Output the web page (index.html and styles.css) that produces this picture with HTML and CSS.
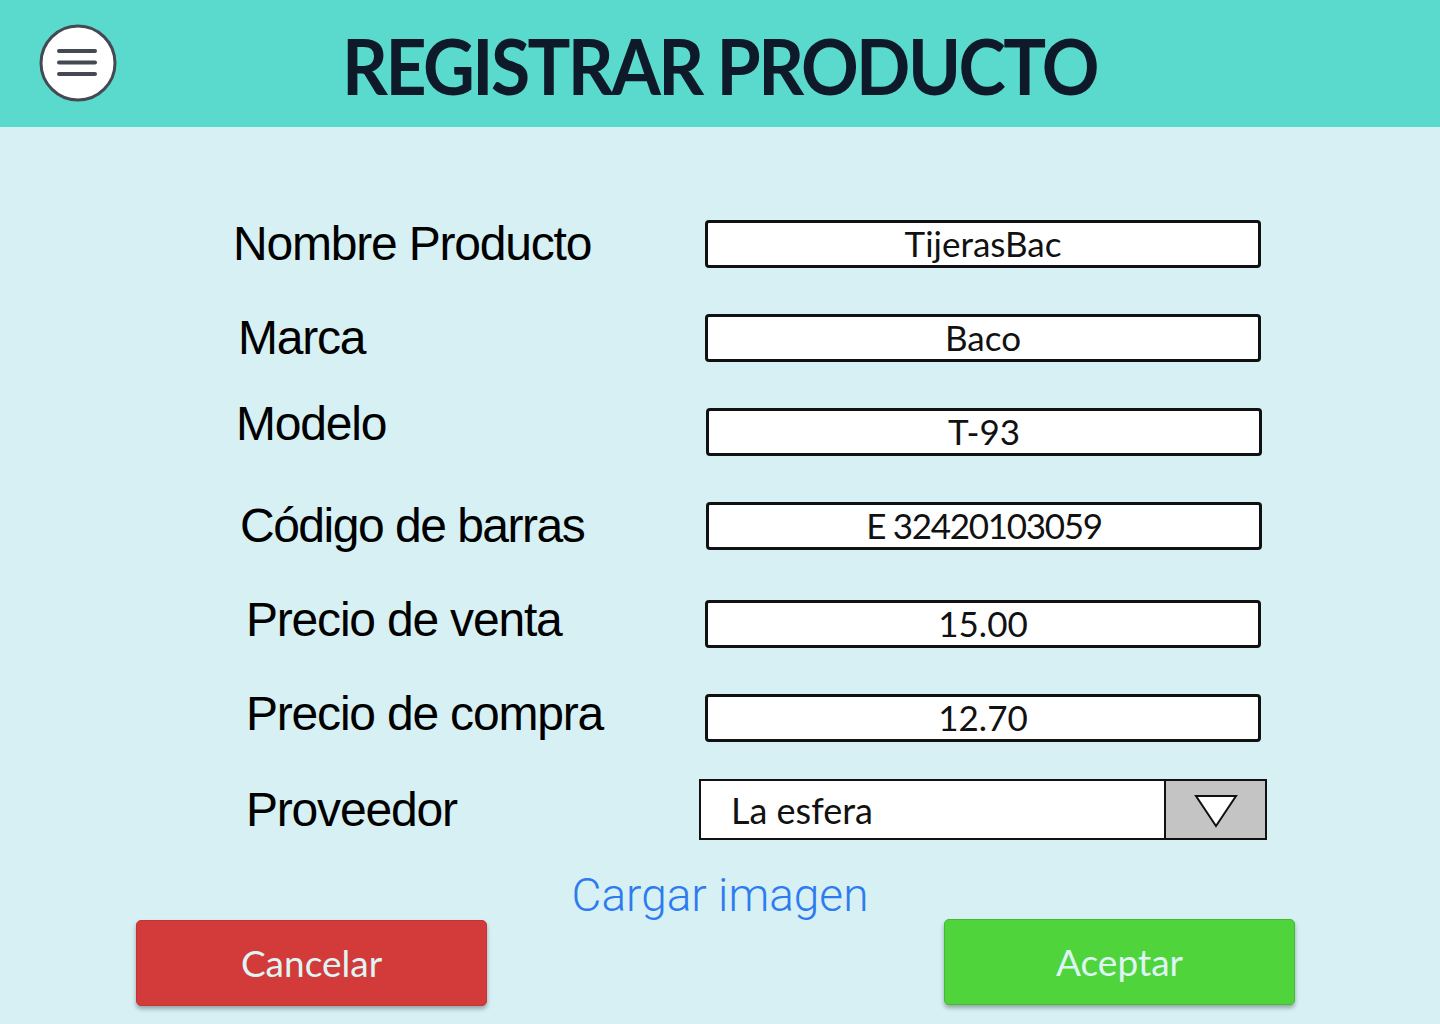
FILE: index.html
```html
<!DOCTYPE html>
<html lang="es">
<head>
<meta charset="utf-8">
<title>Registrar producto</title>
<link rel="stylesheet" href="styles.css">
</head>
<body>
<header class="topbar">
  <button class="menu-btn" aria-label="Menú">
    <svg width="80" height="80" viewBox="0 0 80 80">
      <circle cx="40" cy="40" r="37" fill="#ffffff" stroke="#454954" stroke-width="3"/>
      <g stroke="#454954" stroke-width="4" stroke-linecap="round">
        <line x1="21" y1="28" x2="57" y2="28"/>
        <line x1="21" y1="39.5" x2="57" y2="39.5"/>
        <line x1="21" y1="51" x2="57" y2="51"/>
      </g>
    </svg>
  </button>
  <h1 class="title">REGISTRAR PRODUCTO</h1>
</header>
<main class="content">
  <form class="form">
    <div class="row">
      <span class="label">Nombre Producto</span>
      <div class="field">TijerasBac</div>
    </div>
    <div class="row">
      <span class="label l-marca">Marca</span>
      <div class="field">Baco</div>
    </div>
    <div class="row">
      <span class="label l-modelo">Modelo</span>
      <div class="field f-shift">T-93</div>
    </div>
    <div class="row">
      <span class="label l-codigo">Código de barras</span>
      <div class="field f-shift f-code">E 32420103059</div>
    </div>
    <div class="row row-down">
      <span class="label l-precio l-low">Precio de venta</span>
      <div class="field">15.00</div>
    </div>
    <div class="row">
      <span class="label l-precio l-low">Precio de compra</span>
      <div class="field">12.70</div>
    </div>
    <div class="row row-select">
      <span class="label l-precio">Proveedor</span>
      <div class="select">
        <span class="select-value">La esfera</span>
        <span class="select-arrow">
          <svg width="48" height="40" viewBox="0 0 48 40">
            <polygon points="4,4 44,4 24,34" fill="#ffffff" stroke="#111111" stroke-width="2" stroke-linejoin="miter"/>
          </svg>
        </span>
      </div>
    </div>
  </form>
  <a class="upload" href="#">Cargar imagen</a>
  <div class="actions">
    <button class="btn btn-cancel">Cancelar</button>
    <button class="btn btn-ok">Aceptar</button>
  </div>
</main>
</body>
</html>
```
FILE: styles.css
```css
* { box-sizing: border-box; }
html, body { margin: 0; padding: 0; }
body {
  width: 1440px;
  height: 1024px;
  overflow: hidden;
  background: #d6f0f3;
  font-family: "Lato", "Liberation Sans", sans-serif;
}
.topbar {
  height: 127px;
  background: #5adacc;
  display: flex;
  align-items: center;
  justify-content: center;
  position: relative;
}
.menu-btn {
  position: absolute;
  left: 38px;
  top: 23px;
  width: 80px;
  height: 80px;
  padding: 0;
  border: 0;
  background: transparent;
  cursor: pointer;
}
.menu-btn svg { display: block; }
.title {
  margin: 0;
  font-family: "Lato", sans-serif;
  font-weight: 700;
  font-size: 76px;
  letter-spacing: -2.7px;
  color: #0e1a2a;
  line-height: 1;
  padding-top: 4px;
  transform: scaleX(0.94);
}
.content {
  padding-top: 93px;
}
.form {
  display: flex;
  flex-direction: column;
  gap: 46px;
  margin: 0 0 0 233px;
}
.row {
  display: flex;
  align-items: center;
  height: 48px;
}
.row-down { margin-top: 4px; }
.row-select {
  height: 61px;
  margin-top: -9px;
}
.label {
  flex: 0 0 472px;
  width: 472px;
  font-family: "Liberation Sans", Arial, sans-serif;
  font-size: 48px;
  letter-spacing: -1.2px;
  color: #000;
  white-space: nowrap;
  line-height: 1;
}
.l-marca { padding-left: 5px; }
.l-modelo { padding-left: 3px; position: relative; top: -8px; }
.l-codigo { padding-left: 7px; letter-spacing: -1.5px; }
.l-precio { padding-left: 13px; }
.l-low { position: relative; top: -4px; }
.field {
  width: 556px;
  height: 48px;
  border: 3px solid #111;
  border-radius: 4px;
  background: #fff;
  display: flex;
  align-items: center;
  justify-content: center;
  font-size: 35px;
  color: #111;
  padding-bottom: 3px;
}
.f-shift { margin-left: 1px; }
.f-code { letter-spacing: -1.3px; }
.select {
  margin-left: -6px;
  width: 568px;
  height: 61px;
  border: 2px solid #111;
  background: #fff;
  display: flex;
}
.select-value {
  flex: 1;
  display: flex;
  align-items: center;
  padding-left: 30px;
  font-size: 36px;
  color: #111;
}
.select-arrow {
  width: 101px;
  background: #c4c4c4;
  border-left: 2px solid #111;
  display: flex;
  align-items: center;
  justify-content: center;
  padding-top: 4px;
}
.upload {
  display: block;
  width: max-content;
  margin: 32px auto 0;
  font-family: "Roboto", sans-serif;
  font-weight: 300;
  font-size: 46px;
  line-height: 46px;
  color: #2e7bf0;
  text-decoration: none;
}
.actions {
  display: flex;
  justify-content: space-between;
  margin: 2px 0 0 136px;
  width: 1159px;
}
.btn {
  width: 351px;
  height: 86px;
  border-radius: 5px;
  font-family: "Lato", sans-serif;
  font-size: 37px;
  color: #def5f4;
  box-shadow: 0 3px 4px rgba(0, 0, 0, 0.3);
  cursor: pointer;
  padding: 0 0 2px;
}
.btn-cancel {
  background: #d33b3b;
  border: 1px solid #c53434;
}
.btn-ok {
  background: #4fd43c;
  border: 1px solid #45b837;
  margin-top: -1px;
}
```
